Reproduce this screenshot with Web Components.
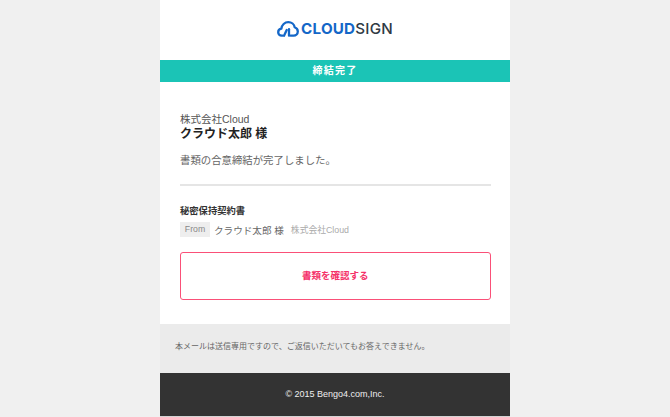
<!DOCTYPE html>
<html><head><meta charset="utf-8">
<style>
html,body{margin:0;padding:0;height:417px;overflow:hidden;background:#f0f0f0;}
body{font-family:"Liberation Sans","Noto Sans CJK JP",sans-serif;}
</style></head><body>
<mail-card>
  <mail-logo></mail-logo>
  <mail-banner>締結完了</mail-banner>
  <mail-body>
    <mail-address company="株式会社Cloud" name="クラウド太郎 様">書類の合意締結が完了しました。</mail-address>
    <mail-doc title="秘密保持契約書" from="クラウド太郎 様" company="株式会社Cloud"></mail-doc>
    <mail-button>書類を確認する</mail-button>
  </mail-body>
  <mail-note>本メールは送信専用ですので、ご返信いただいてもお答えできません。</mail-note>
  <mail-footer>© 2015 Bengo4.com,Inc.</mail-footer>
</mail-card>
<script>
function def(name,html){customElements.define(name,class extends HTMLElement{
  connectedCallback(){ if(this.shadowRoot)return; const r=this.attachShadow({mode:'open'});
    r.innerHTML=html.replace(/\{(\w+)\}/g,(m,k)=>this.getAttribute(k)||''); }
});}
def('mail-card',`<style>:host{display:flex;flex-direction:column;width:350px;height:417px;margin:0 auto;background:#fff;box-sizing:border-box;border-bottom:1px solid #d4d4d4}</style><slot></slot>`);
def('mail-logo',`<style>:host{display:flex;height:60px;flex:none;align-items:center;justify-content:center;box-sizing:border-box;padding-bottom:3px}
svg{display:block;margin-right:2px}
.t{font:700 15.2px/1 Inter,"Liberation Sans",sans-serif;letter-spacing:.2px;color:#1467c8}
.s{font:500 15.2px/1 Inter,"Liberation Sans",sans-serif;letter-spacing:.2px;color:#2f3a44}
</style>
<svg width="22" height="16" viewBox="0 0 22 16" fill="none" stroke="#1467c8" stroke-width="2.3" stroke-linecap="round" stroke-linejoin="round"><path d="M5.5 14.7H4.7C2.6 14.7 1.2 13 1.2 11.2C1.2 9.4 2.5 8 4.4 7.7C4.7 3.8 7.8 1.2 11.3 1.2C14.6 1.2 17.2 3.4 17.7 6.3C19.5 7 20.8 8.7 20.8 10.6C20.8 12.9 19 14.7 16.6 14.7H13.6"/><path d="M7 14.7L9.7 9"/><path d="M12 8.2V14.7"/></svg>
<span class="t">CLOUD</span><span class="s">SIGN</span>`);
def('mail-banner',`<style>:host{display:block;flex:none;height:22px;background:#1bc4b6;color:#fff;font-size:10px;font-weight:700;line-height:22px;text-align:center;letter-spacing:1.3px}</style><slot></slot>`);
def('mail-body',`<style>:host{display:flex;flex-direction:column;flex:none;height:242px;box-sizing:border-box;padding:30px 19.5px 0 20px}</style><slot></slot>`);
def('mail-address',`<style>:host{display:block;border-bottom:2px solid #e5e5e5;height:72px;}
.c{font-size:10.5px;line-height:14px;color:#555}
.n{font-size:12px;font-weight:700;line-height:15px;margin-top:1px;color:#222}
.m{font-size:10.4px;line-height:14px;color:#666;margin-top:12px}</style>
<div class="c">{company}</div><div class="n">{name}</div><div class="m"><slot></slot></div>`);
def('mail-doc',`<style>:host{display:block;margin-top:18px}
.t{font-size:9.3px;font-weight:700;line-height:14px;color:#333}
.r{display:flex;align-items:center;margin-top:4px;height:15px}
.f{background:#eee;color:#888;font-size:8.7px;width:30px;height:15px;line-height:15px;text-align:center;margin-right:4px}
.n{font-size:9.6px;color:#666;margin-right:7px}
.c{font-size:8.8px;color:#aaa}</style>
<div class="t">{title}</div><div class="r"><span class="f">From</span><span class="n">{from}</span><span class="c">{company}</span></div>`);
def('mail-button',`<style>:host{display:block;margin-top:15px;height:48px;box-sizing:border-box;border:1px solid #fa5078;border-radius:3px;color:#f5326a;font-size:9.5px;font-weight:700;line-height:45px;text-align:center}</style><slot></slot>`);
def('mail-note',`<style>:host{display:block;flex:none;height:49px;box-sizing:border-box;background:#ebebeb;color:#666;font-size:8px;line-height:46px;padding-left:15px}</style><slot></slot>`);
def('mail-footer',`<style>:host{display:block;flex:1;background:#333;color:#eee;font-size:9px;line-height:43px;text-align:center}</style><slot></slot>`);
</script>
</body></html>
